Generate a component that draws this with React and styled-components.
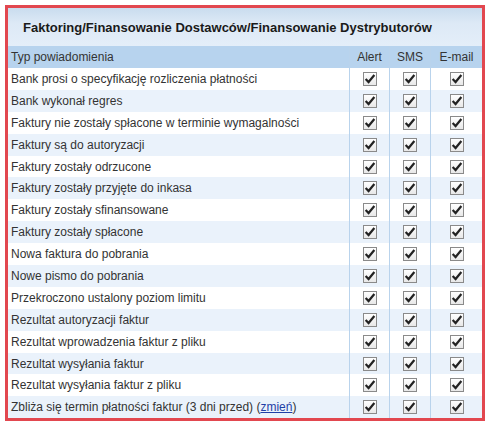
import React from "react";
import styled, { createGlobalStyle } from "styled-components";

const rows = [
	"Bank prosi o specyfikację rozliczenia płatności",
	"Bank wykonał regres",
	"Faktury nie zostały spłacone w terminie wymagalności",
	"Faktury są do autoryzacji",
	"Faktury zostały odrzucone",
	"Faktury zostały przyjęte do inkasa",
	"Faktury zostały sfinansowane",
	"Faktury zostały spłacone",
	"Nowa faktura do pobrania",
	"Nowe pismo do pobrania",
	"Przekroczono ustalony poziom limitu",
	"Rezultat autoryzacji faktur",
	"Rezultat wprowadzenia faktur z pliku",
	"Rezultat wysyłania faktur",
	"Rezultat wysyłania faktur z pliku",
];

const Global = createGlobalStyle`
	body { margin: 0; background: #fff; font-family: "Liberation Sans", Arial, sans-serif; }
`;

const Frame = styled.div`
	margin: 5px 5px 0 5px;
	width: 474px;
	border: 3px solid #e2474f;
	background: #f4f8fc;
`;

const Title = styled.div`
	height: 38px;
	display: flex;
	align-items: center;
	padding-left: 15px;
	font-size: 13px;
	font-weight: bold;
	color: #1a1a1a;
	background: linear-gradient(#c9dcee, #dde9f6 40%, #e4eef9);
`;

const Table = styled.div`
	display: grid;
	grid-template-columns: 341px 40px 41px 1fr;
	font-size: 12px;
	color: #333;
`;

const Cell = styled.div`
	height: ${p => (p.$head ? 22 : 21.9)}px;
	display: flex;
	align-items: center;
	justify-content: ${p => (p.$center ? "center" : "flex-start")};
	padding-left: ${p => (p.$center ? 0 : 3)}px;
	background: ${p => (p.$head ? "#b7d3ee" : p.$odd ? "#eaf2fb" : "#ffffff")};
	border-left: ${p => (p.$center ? "1px solid #b9d3ec" : "none")};
	white-space: nowrap;
`;

const Link = styled.a`
	color: #1f3fa6;
	text-decoration: underline;
`;

const Box = styled.span`
	width: 14px;
	height: 14px;
	box-sizing: border-box;
	border: 1px solid #8a8a8a;
	background: linear-gradient(#fff, #e8e8e8);
	display: flex;
	align-items: center;
	justify-content: center;
`;

const Check = () => (
	<Box>
		<svg width="12" height="12" viewBox="0 0 11 11">
			<path d="M1.5 5.5 L4.2 8.3 L9.5 1.8" fill="none" stroke="#222" strokeWidth="2" />
		</svg>
	</Box>
);

const Row = ({ odd, children }) => (
	<>
		<Cell $odd={odd}>{children}</Cell>
		{[0, 1, 2].map(i => (
			<Cell key={i} $center $odd={odd}><Check /></Cell>
		))}
	</>
);

export default function App() {
	return (
		<>
			<Global />
			<Frame>
				<Title>Faktoring/Finansowanie Dostawców/Finansowanie Dystrybutorów</Title>
				<Table>
					<Cell $head>Typ powiadomienia</Cell>
					<Cell $head $center>Alert</Cell>
					<Cell $head $center>SMS</Cell>
					<Cell $head $center>E-mail</Cell>
					{rows.map((r, i) => (
						<Row key={i} odd={i % 2 === 1}>{r}</Row>
					))}
					<Row odd={true}>
						Zbliża się termin płatności faktur (3 dni przed)&nbsp;(<Link href="#">zmień</Link>)
					</Row>
				</Table>
			</Frame>
		</>
	);
}
